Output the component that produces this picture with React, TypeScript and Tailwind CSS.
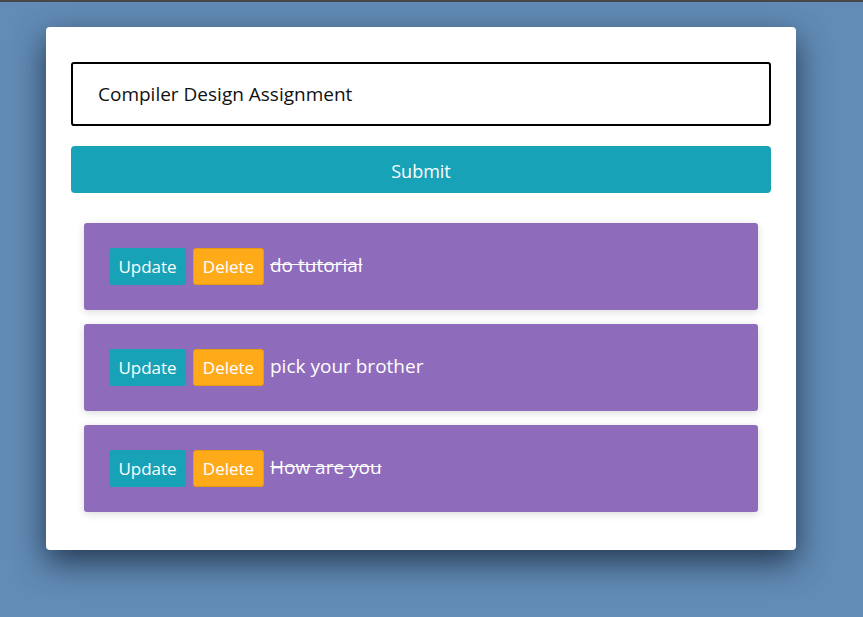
import { useState } from "react";

type Todo = { id: number; text: string; done: boolean };

export default function App() {
  const [text, setText] = useState("Compiler Design Assignment");
  const [todos] = useState<Todo[]>([
    { id: 1, text: "do tutorial", done: true },
    { id: 2, text: "pick your brother", done: false },
    { id: 3, text: "How are you", done: true },
  ]);

  return (
    <div className="min-h-[617px] w-full bg-[#628bb5] border-t-2 border-[#474747] font-['Open_Sans',sans-serif]">
      <div className="ml-[46px] mt-[25px] w-[750px] rounded-[4px] bg-white px-[25px] pt-[35px] pb-[38px] shadow-[0_12px_32px_rgba(20,35,55,0.8)]">
        {/* Input */}
        <input
          autoFocus
          value={text}
          onChange={(e) => setText(e.target.value)}
          className="block h-[64px] w-full rounded-[3px] border-2 border-black px-[25px] text-[19px] text-[#111] caret-black outline-none"
        />

        {/* Submit */}
        <button className="mt-[20px] block h-[47px] w-full rounded-[4px] bg-[#17a2b8] pt-[3px] text-[18px] text-white">
          Submit
        </button>

        {/* List */}
        <div className="mt-[30px] flex flex-col gap-[14px] px-[13px]">
          {todos.map((t) => (
            <div
              key={t.id}
              className="flex h-[87px] items-center gap-[6px] rounded-[3px] bg-[#8f6bbc] px-[25px] shadow-[0_2px_8px_rgba(0,0,0,0.15)]"
            >
              <button className="h-[37px] w-[77px] rounded-[3px] bg-[#17a2b8] text-[17px] text-white">
                Update
              </button>
              <button className="ml-[1px] h-[37px] w-[71px] rounded-[3px] border border-[#e89a10] bg-[#ffab19] text-[17px] text-white">
                Delete
              </button>
              <span
                className={`-mt-[3px] text-[19px] text-white ${t.done ? "line-through" : ""}`}
              >
                {t.text}
              </span>
            </div>
          ))}
        </div>
      </div>
    </div>
  );
}
